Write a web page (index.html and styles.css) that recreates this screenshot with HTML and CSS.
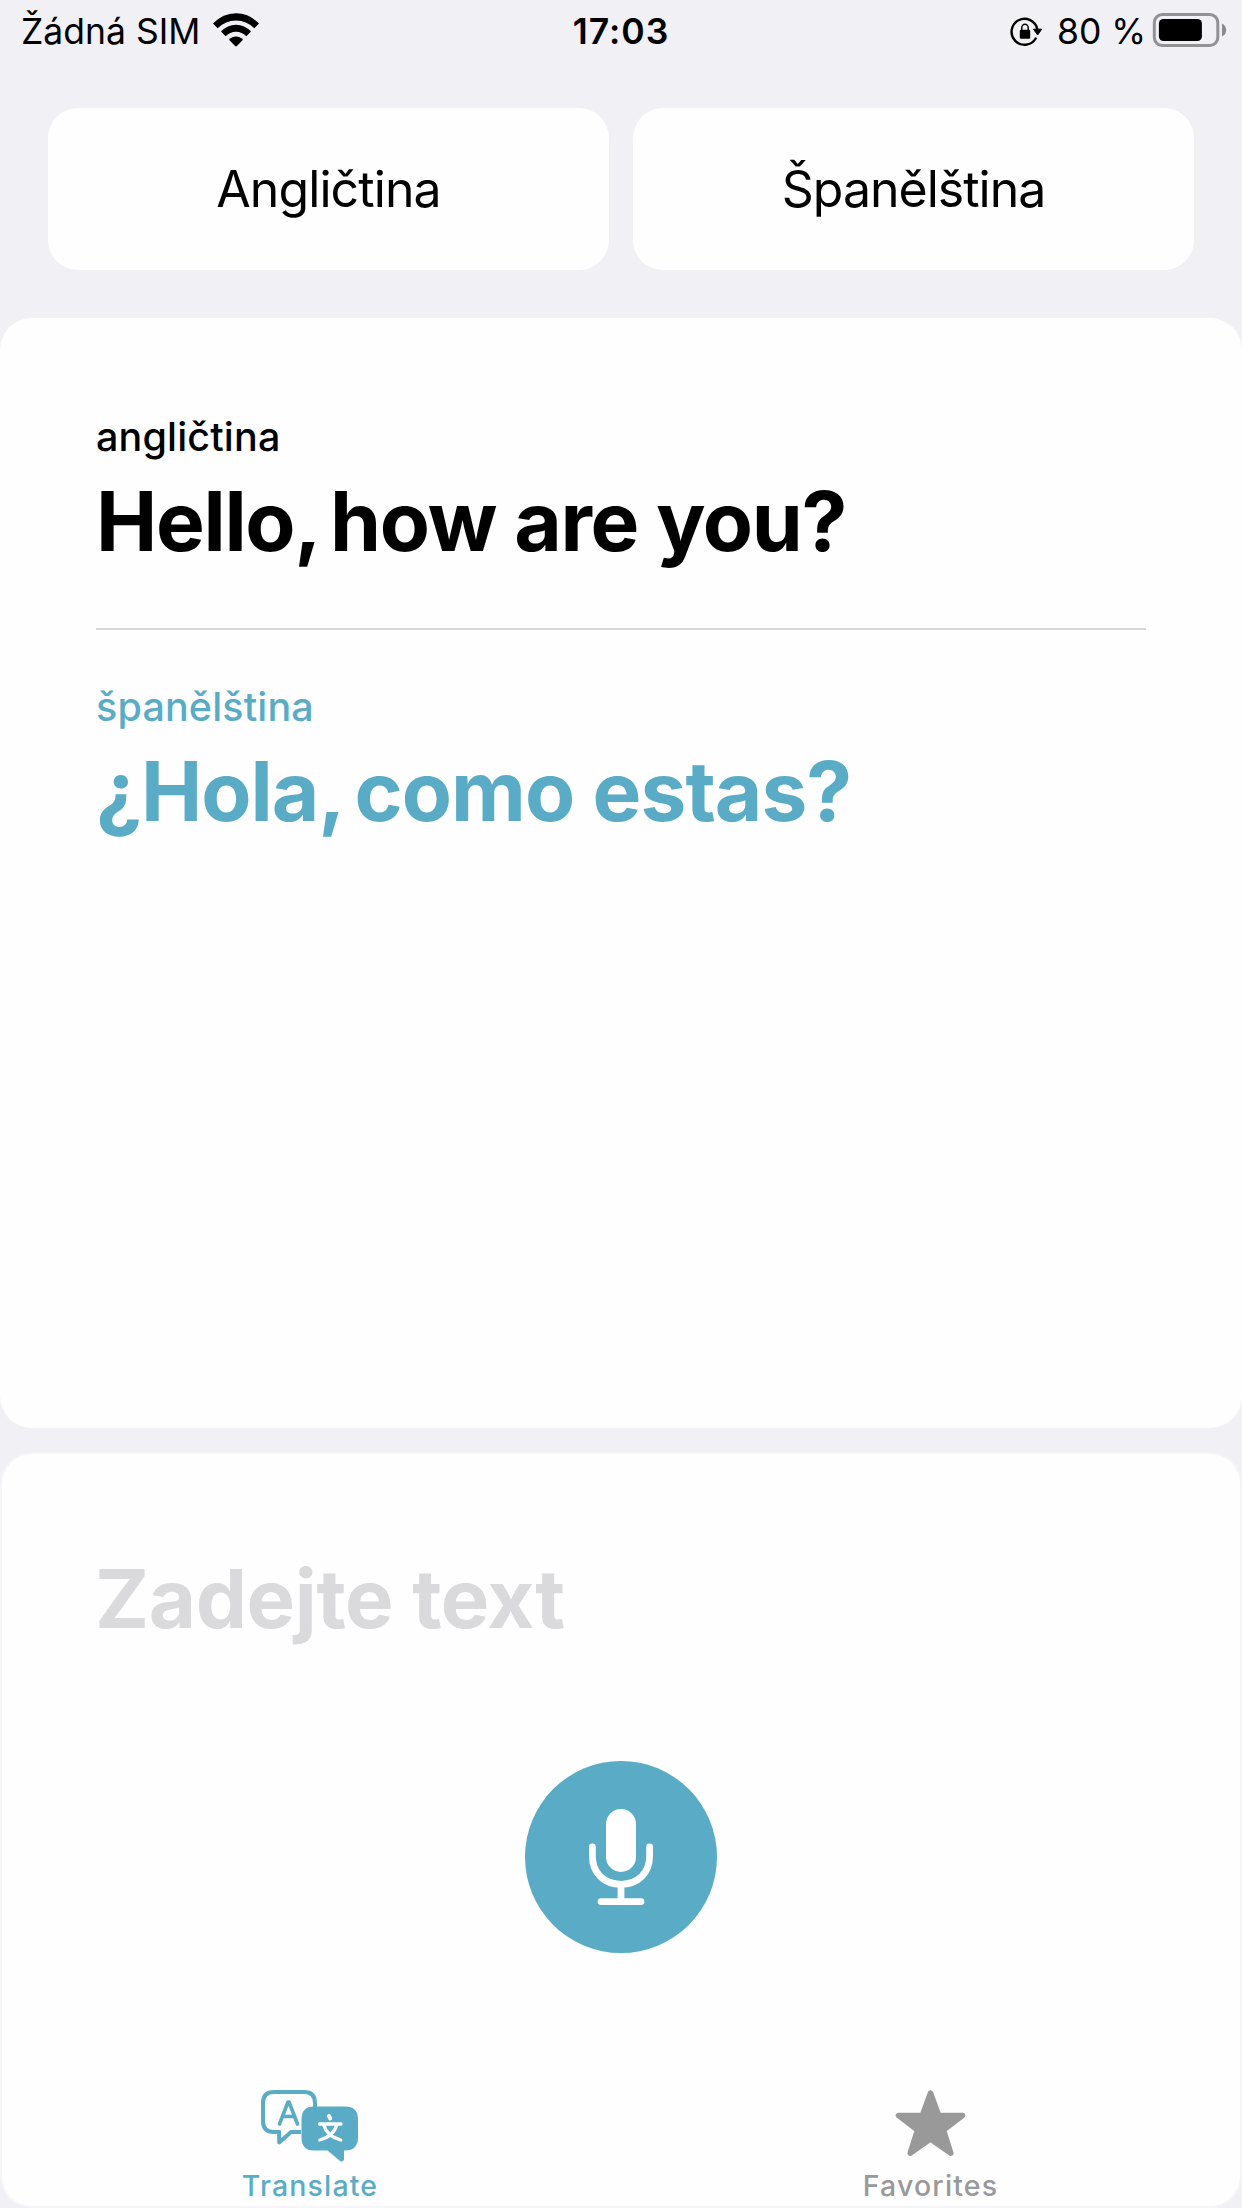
FILE: index.html
```
<!DOCTYPE html>
<html lang="cs">
<head>
<meta charset="utf-8">
<title>Translate</title>
<link rel="stylesheet" href="styles.css">
</head>
<body>
<div class="screen">
  <header class="status">
    <div class="status-left">
      <span class="carrier">Žádná SIM</span>
      <svg class="wifi" width="46" height="34" viewBox="0 0 46 34">
        <path d="M0 10.5Q10 0.3 23 0.3T46 10.5L41.3 15.3Q33.500 7.500 23 7.500T4.700 15.300Z"/>
        <path d="M8 18.600Q14.500 11.700 23 11.700T38 18.600L33.300 23.300Q29 18.800 23 18.800T12.700 23.300Z"/>
        <path d="M16 26.700Q19 23.400 23 23.400T30 26.700L23.900 33Q23 33.800 22.100 33Z"/>
      </svg>
    </div>
    <time class="clock">17:03</time>
    <div class="status-right">
      <svg class="lock" width="32" height="30" viewBox="0 0 32 30">
        <path d="M27.300 12.200A13 13 0 1 0 25.700 21.500" fill="none" stroke="#000" stroke-width="2.400" stroke-linecap="round"/>
        <path d="M23.500 12.200H31.700L27.600 18Z" stroke="#000" stroke-width="1" stroke-linejoin="round"/>
        <rect x="9.800" y="12.800" width="10.400" height="9" rx="1.200"/>
        <path d="M11.800 13.500V10.800A3.200 3.600 0 0 1 18.200 10.800V13.500" fill="none" stroke="#000" stroke-width="1.500"/>
      </svg>
      <span class="percent">80 %</span>
      <svg class="battery" width="76" height="36" viewBox="0 0 76 36">
        <rect x="2.300" y="2.500" width="63.500" height="31" rx="8" fill="none" stroke="#929296" stroke-width="3"/>
        <rect x="6.900" y="7" width="43" height="22" rx="4.500"/>
        <path d="M70 11.500Q74.200 13.500 74.200 18T70 24.500Z" fill="#8b8b8f"/>
      </svg>
    </div>
  </header>

  <nav class="languages">
    <button class="language">Angličtina</button>
    <button class="language spanish">Španělština</button>
  </nav>

  <main class="card result">
    <h2 class="label">angličtina</h2>
    <p class="phrase source"><span class="lead">Hello, </span>how are you?</p>
    <hr class="divider">
    <h2 class="label accent">španělština</h2>
    <p class="phrase target accent"><span class="lead">¿Hola, </span>como estas?</p>
  </main>

  <section class="card entry">
    <p class="phrase placeholder">Zadejte text</p>
    <button class="mic" aria-label="Mikrofon">
      <svg width="64" height="96" viewBox="0 0 64 96">
        <rect x="17" y="0" width="30" height="63" rx="15" fill="#fff"/>
        <path d="M3.400 38V47C3.400 64 15 75.300 32 75.300S60.600 64 60.600 47V38M32 75.300V92.600M12 92.600H52" fill="none" stroke="#fff" stroke-width="6.800" stroke-linecap="round"/>
      </svg>
    </button>
    <footer class="tabs">
      <a class="tab active">
        <svg width="100" height="74" viewBox="0 -0.500 100 74">
          <path d="M41 42.500H31L19.200 53V42.500H14Q3 42.500 3 31.500V13.500Q3 2.500 14 2.500H44Q55 2.500 55 13.500V18" fill="none" stroke="currentColor" stroke-width="4" stroke-linejoin="round"/>
          <path d="M19.500 34.500L28 12.500H29L37.500 34.500M22.500 27H34.500" fill="none" stroke="currentColor" stroke-width="3.600" stroke-linecap="round" stroke-linejoin="round"/>
          <path d="M54 17H85Q98 17 98 30V48Q98 61 85 61H84V70Q83 73 80 71.500L67.500 61H54Q41.500 61 41.500 48V30Q41.500 17 54 17Z" fill="currentColor"/>
          <path d="M69 26.500L70.200 29" fill="none" stroke="#fff" stroke-width="4" stroke-linecap="round"/>
          <path d="M59.500 34.500H81M63.500 35Q67 47 80.800 50.500M77 35Q73.500 47 59.800 50.500" fill="none" stroke="#fff" stroke-width="3.300" stroke-linecap="round"/>
        </svg>
        <span class="tab-name">Translate</span>
      </a>
      <a class="tab">
        <svg width="74" height="74" viewBox="0.500 1 74 74">
          <path d="M37 5L45.200 27.500H69L50 42L57.300 65.200L37 51L16.700 65.200L24 42L5 27.500H28.800Z" fill="currentColor" stroke="currentColor" stroke-width="5.500" stroke-linejoin="round"/>
        </svg>
        <span class="tab-name">Favorites</span>
      </a>
    </footer>
  </section>
</div>
</body>
</html>
```
FILE: styles.css
```
* { box-sizing: border-box; }
body {
  margin: 0;
  background: #f1f0f5;
  color: #000;
  font-family: Inter, "Liberation Sans", sans-serif;
}
.screen {
  display: flex;
  flex-direction: column;
  width: 1242px;
  height: 2208px;
}
svg { display: block; flex: none; }
h2, p { margin: 0; white-space: nowrap; }
button { border: 0; padding: 0; font-family: inherit; color: inherit; }

.status {
  display: grid;
  grid-template-columns: 1fr auto 1fr;
  height: 108px;
  padding: 10px 14px 0;
  font-size: 35.5px;
  line-height: 44px;
  white-space: nowrap;
}
.status-left, .status-right { display: flex; align-items: flex-start; }
.status-right { justify-content: flex-end; }
.carrier { width: 192px; margin-left: 7px; letter-spacing: 0; }
.wifi { margin-top: 3px; }
.clock { font-weight: 600; letter-spacing: 1px; }
.lock { margin: 7px 15px 0 0; }
.percent { width: 95px; letter-spacing: 0; }
.battery { margin-top: 2px; }

.languages {
  display: grid;
  grid-template-columns: 1fr 1fr;
  gap: 24px;
  padding: 0 48px;
  height: 162px;
}
.language {
  border-radius: 30px;
  background: #fefefe;
  font-size: 50px;
  letter-spacing: -.9px;
}
.spanish { letter-spacing: -1px; }

.card { border-radius: 32px; background: #fefefe; }
.result { height: 1110px; margin-top: 48px; padding: 96px 96px 0; }
.label {
  font-size: 39.5px;
  font-weight: 500;
  line-height: 46px;
  letter-spacing: .15px;
}
.phrase {
  font-size: 82px;
  font-weight: 700;
  line-height: 98px;
}
.label + .phrase { margin-top: 13px; }
.source { letter-spacing: -1.3px; }
.target { letter-spacing: -1px; }
.lead { word-spacing: -6px; }
.divider {
  height: 2px;
  margin: 57px 0 54px;
  border: 0;
  background: #d6d6d7;
}
.accent { color: #5aacc6; }

.entry {
  display: flex;
  flex-direction: column;
  flex: 1;
  margin-top: 24px;
  border: 2px solid #f5f5f8;
  padding-top: 96px;
}
.placeholder {
  padding-left: 93px;
  color: #dadadc;
  font-size: 81.5px;
  letter-spacing: -.4px;
}
.mic {
  display: grid;
  place-items: center;
  align-self: center;
  width: 192px;
  height: 192px;
  margin-top: 113px;
  border-radius: 50%;
  background: #5aacc6;
}
.tabs {
  display: grid;
  grid-template-columns: 1fr 1fr;
  margin-top: auto;
  padding-bottom: 3px;
}
.tab {
  display: flex;
  flex-direction: column;
  align-items: center;
  gap: 6px;
  color: #999;
}
.active { padding-right: 3px; color: #5aacc6; }
.tab-name {
  font-size: 28.5px;
  font-weight: 500;
  line-height: 34px;
  letter-spacing: 1.15px;
}
```
